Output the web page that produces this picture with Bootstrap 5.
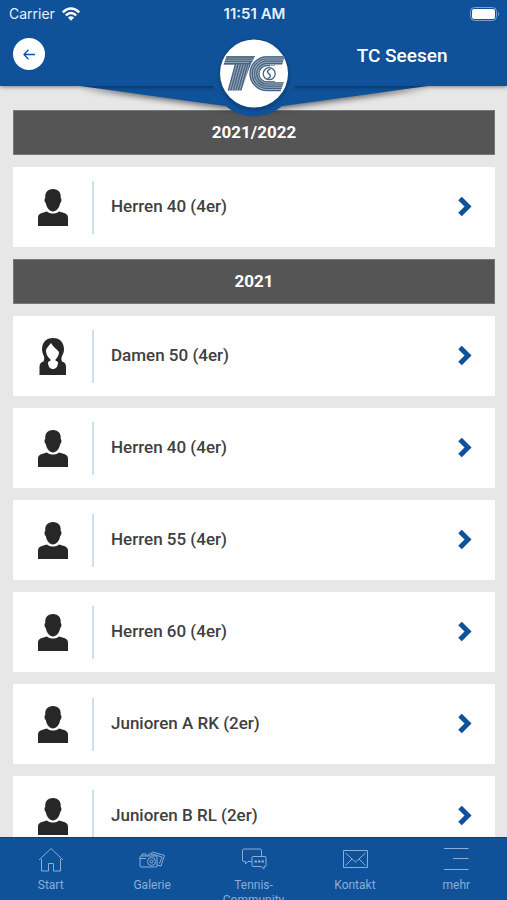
<!DOCTYPE html>
<html lang="de">
<head>
<meta charset="utf-8">
<meta name="viewport" content="width=device-width, initial-scale=1">
<title>TC Seesen</title>
<link href="https://cdn.jsdelivr.net/npm/bootstrap@5.3.0/dist/css/bootstrap.min.css" rel="stylesheet">
<style>
  :root { --club: #0f5299; }
  body { font-family: Roboto, "Liberation Sans", sans-serif; background: #e7e7e7; color: #404040; }
  .club-bg { background: var(--club); }
  .app-head { box-shadow: 0 1px 4px rgba(0,0,0,.45); padding-bottom: 14px; }
  .status { font-family: Inter, "Liberation Sans", sans-serif; font-size: 14px; line-height: 28px; color: #e6f0fb; padding: 0 7px 0 9px; }
  .status-carrier { gap: 6px; }
  .status-time { font-size: 15px; font-weight: 600; }
  .back { width: 32px; height: 32px; }
  .title-bar { padding: 10px 0 0 13px; height: 44px; }
  .club-name { font-size: 19px; font-weight: 500; line-height: 36px; }
  .ridge { left: 50%; top: 86px; transform: translateX(-50%); filter: drop-shadow(0 2px 3px rgba(0,0,0,.6)); }
  .emblem { left: 50%; top: 30px; transform: translateX(-50%); }
  .teams { padding: 24px 12px 0 13px; gap: 12px; }
  .season { background: #555; color: #fff; font-size: 17px; font-weight: 700; line-height: 45px; outline: 1px solid #777; outline-offset: -1px; }
  .team { height: 80px; color: #404040; font-size: 17px; font-weight: 500; padding-right: 23px; }
  .team-icon { width: 81px; height: 53px; border-right: 2px solid #cfdfee; padding-top: 2px; }
  .team-name { padding-left: 17px; }
  .tabs { height: 63px; border-top: 1px solid #0a3f7a; }
  .tab-link { color: #8baed6; font-size: 12px; line-height: 15px; padding-top: 7px; }
  .tab-link svg { margin-bottom: 5px; }
</style>
<script src="https://cdn.jsdelivr.net/npm/bootstrap@5.3.0/dist/js/bootstrap.bundle.min.js" defer></script>
</head>
<body>
<svg class="d-none" aria-hidden="true">
  <symbol id="man" viewBox="0 0 30 38">
    <path fill="#272727" d="M15 0C9.500 0 6.800 3.500 7.300 9C6.200 9 6.300 13.500 7.700 13.800C8.600 19 11.500 22.500 15 22.500S21.400 19 22.300 13.800C23.700 13.500 23.800 9 22.700 9C23.200 3.500 20.500 0 15 0Z"/>
    <path fill="#272727" d="M9 22.500C12 25.300 18 25.300 21 22.500C26 24 30 24.500 30 28.500V37H0V28.500C0 24.500 4 24 9 22.500Z"/>
  </symbol>
  <symbol id="woman" viewBox="0 0 30 38">
    <path fill="#272727" fill-rule="evenodd" d="M15 0C8 0 4.200 4.500 4 11C3.900 17 8 18 5.500 23.500C2.500 24.500 1.500 26 1.500 29V37H28V29C28 26 27 24.500 24 23.500C22 18 26.200 17 26 11C25.800 4.500 22 0 15 0ZM13 5C15 9 19 11 21 14C21 17.500 19 20 17.500 21.500V22.500L20 24C20 28.500 18 31 15 31S10 28.500 10 24L12.500 22.500V21.500C10 19.500 8 16 8 13C8 10 11 8 13 5Z"/>
  </symbol>
  <symbol id="next" viewBox="0 0 14 20"><path fill="none" stroke="#0f5299" stroke-width="5" d="M2 1.500L10 9.500L2 17.500"/></symbol>
</svg>

<div class="d-flex flex-column vh-100 overflow-hidden">
  <header class="position-relative z-2">
    <svg class="ridge position-absolute" width="400" height="26" viewBox="0 0 400 26" aria-hidden="true"><path fill="#0f5299" d="M0 -2H400L374 0L200 24L26 0Z"/></svg>
    <div class="app-head club-bg position-relative">
      <div class="status row g-0 align-items-center">
        <div class="status-carrier col d-flex align-items-center">Carrier
          <svg width="20" height="14" viewBox="0 0 18 14" role="img" aria-label="WLAN"><g fill="none" stroke="#fff" stroke-width="2.500"><path d="M.8 5.300Q9 -2.300 17.200 5.300M3.800 8.400Q9 3.600 14.200 8.400"/></g><path fill="#fff" d="M5.900 10.500Q9 8 12.100 10.500L9 13.700Z"/></svg>
        </div>
        <div class="status-time col text-center">11:51 AM</div>
        <div class="col d-flex justify-content-end">
          <svg width="30" height="14" viewBox="0 0 30 14" role="img" aria-label="Akku voll"><rect x=".5" y=".5" width="26" height="13" rx="4" fill="none" stroke="#7aa3d2"/><rect x="2" y="2" width="23" height="10" rx="2" fill="#fff"/><path fill="#7aa3d2" d="M28 4.500Q30 7 28 9.500Z"/></svg>
        </div>
      </div>
      <div class="title-bar row g-0">
        <div class="col-7"><button type="button" class="back btn p-0 bg-white rounded-circle border-0 d-flex align-items-center justify-content-center" aria-label="Zurück"><svg width="12" height="11" viewBox="0 0 12 11"><path fill="none" stroke="#0f5299" stroke-width="1.300" d="M5.500 .8L1 5.500L5.500 10.200M1 5.500H12"/></svg></button></div>
        <h1 class="club-name col-5 mb-0 text-white text-center pe-1">TC Seesen</h1>
      </div>
    </div>
    <svg class="emblem position-absolute" width="88" height="88" viewBox="210 30 88 88" role="img" aria-label="TC Seesen Logo">
      <defs>
        <radialGradient id="halo"><stop offset=".76" stop-color="#083465"/><stop offset="1" stop-color="#0f5299"/></radialGradient>
        <clipPath id="tee"><path d="M226.500 56H255L248 71L241.500 90.500H227.500L234.500 65H223.500Z"/></clipPath>
        <clipPath id="cee"><path d="M245 55H285L282 65H275V82H284L280.500 91.500H245Z"/></clipPath>
      </defs>
      <circle cx="254" cy="73.500" r="43" fill="#0f5299"/>
      <circle cx="254" cy="75" r="38" fill="url(#halo)"/>
      <circle cx="254" cy="73.500" r="34" fill="#fff"/>
      <g clip-path="url(#tee)">
        <path fill="#94a6b7" d="M222 55H256V92H222Z"/>
        <path fill="none" stroke="#456280" stroke-width="1.300" d="M222 57H256M222 59.200H255M222 61.400H253M222 63.600H251M235.500 64L228 92M238 64L230.500 92M240.500 64L233 92M243 64L235.500 92M245.500 64L238 92M248 63L240.500 92M250.500 62L243 92"/>
      </g>
      <circle cx="268" cy="73.700" r="19.300" fill="#fff"/>
      <g clip-path="url(#cee)" fill="none">
        <path stroke="#9dadbc" stroke-width="10" d="M286 61H267A12.700 12.700 0 0 0 267 86.400H286"/>
        <path stroke="#456280" stroke-width="1.200" d="M286 56.800H267A16.900 16.900 0 0 0 267 90.600H286M286 59H267A14.700 14.700 0 0 0 267 88.400H286M286 61.200H267A12.500 12.500 0 0 0 267 86.200H286M286 63.400H267A10.300 10.300 0 0 0 267 84H286M270 65.600H267A8.100 8.100 0 0 0 267 81.800H286"/>
      </g>
      <circle cx="269.200" cy="73.700" r="6" fill="#fff" stroke="#456280" stroke-width="1.300"/>
      <path fill="none" stroke="#2d4e6e" stroke-width="1.300" d="M270.500 69C266 70.500 267.500 73 269.300 74C271 75.500 270.500 78 267.500 78.500"/>
    </svg>
  </header>

  <main class="teams d-flex flex-column flex-grow-1 overflow-hidden">
    <h2 class="season text-center mb-0 flex-shrink-0">2021/2022</h2>
    <a href="#" class="team bg-white text-decoration-none d-flex align-items-center flex-shrink-0"><span class="team-icon d-flex align-items-center justify-content-center"><svg width="30" height="38"><use href="#man"/></svg></span><span class="team-name flex-grow-1">Herren 40 (4er)</span><svg width="14" height="20"><use href="#next"/></svg></a>
    <h2 class="season text-center mb-0 flex-shrink-0">2021</h2>
    <a href="#" class="team bg-white text-decoration-none d-flex align-items-center flex-shrink-0"><span class="team-icon d-flex align-items-center justify-content-center"><svg width="30" height="38"><use href="#woman"/></svg></span><span class="team-name flex-grow-1">Damen 50 (4er)</span><svg width="14" height="20"><use href="#next"/></svg></a>
    <a href="#" class="team bg-white text-decoration-none d-flex align-items-center flex-shrink-0"><span class="team-icon d-flex align-items-center justify-content-center"><svg width="30" height="38"><use href="#man"/></svg></span><span class="team-name flex-grow-1">Herren 40 (4er)</span><svg width="14" height="20"><use href="#next"/></svg></a>
    <a href="#" class="team bg-white text-decoration-none d-flex align-items-center flex-shrink-0"><span class="team-icon d-flex align-items-center justify-content-center"><svg width="30" height="38"><use href="#man"/></svg></span><span class="team-name flex-grow-1">Herren 55 (4er)</span><svg width="14" height="20"><use href="#next"/></svg></a>
    <a href="#" class="team bg-white text-decoration-none d-flex align-items-center flex-shrink-0"><span class="team-icon d-flex align-items-center justify-content-center"><svg width="30" height="38"><use href="#man"/></svg></span><span class="team-name flex-grow-1">Herren 60 (4er)</span><svg width="14" height="20"><use href="#next"/></svg></a>
    <a href="#" class="team bg-white text-decoration-none d-flex align-items-center flex-shrink-0"><span class="team-icon d-flex align-items-center justify-content-center"><svg width="30" height="38"><use href="#man"/></svg></span><span class="team-name flex-grow-1">Junioren A RK (2er)</span><svg width="14" height="20"><use href="#next"/></svg></a>
    <a href="#" class="team bg-white text-decoration-none d-flex align-items-center flex-shrink-0"><span class="team-icon d-flex align-items-center justify-content-center"><svg width="30" height="38"><use href="#man"/></svg></span><span class="team-name flex-grow-1">Junioren B RL (2er)</span><svg width="14" height="20"><use href="#next"/></svg></a>
  </main>

  <nav class="tabs club-bg row g-0 flex-shrink-0 overflow-hidden text-center" aria-label="Hauptmenü">
    <a href="#" class="tab-link col text-decoration-none d-flex flex-column align-items-center"><svg class="flex-shrink-0" width="28" height="28" viewBox="0 0 28 28" fill="none" stroke="currentColor"><path d="M2 15L14 3.500L26 15M4.500 14V26H11.500V18.500H16.500V26H23.500V14"/></svg>Start</a>
    <a href="#" class="tab-link col text-decoration-none d-flex flex-column align-items-center"><svg class="flex-shrink-0" width="28" height="28" viewBox="0 0 28 28" fill="none" stroke="currentColor"><rect x="2" y="11" width="17" height="11" rx="1"/><path d="M4 11V9H8V11M10 11L11 9H15L16 11M13 9L14.500 7L26.500 10.500L23 21L19 20M16 9.500L24 12L21.500 18.500"/><circle cx="13.500" cy="16.500" r="4"/><circle cx="13.500" cy="16.500" r="1.500"/><path d="M2 13.500H8"/></svg>Galerie</a>
    <a href="#" class="tab-link col text-decoration-none d-flex flex-column align-items-center"><svg class="flex-shrink-0" width="28" height="28" viewBox="0 0 28 28" fill="none" stroke="currentColor"><path d="M11.500 16.500H8L5.500 19V16.500H4Q2.500 16.500 2.500 15V5.500Q2.500 4 4 4H20Q21.500 4 21.500 5.500V11M13 11.500H25Q26 11.500 26 12.500V20.500Q26 21.500 25 21.500H24V24L21 21.500H13Q12 21.500 12 20.500V12.500Q12 11.500 13 11.500Z"/><path stroke-width="2" d="M14.500 16.500H17M18 16.500H20.500M21.500 16.500H24"/></svg><span>Tennis-<br>Community</span></a>
    <a href="#" class="tab-link col text-decoration-none d-flex flex-column align-items-center"><svg class="flex-shrink-0" width="28" height="28" viewBox="0 0 28 28" fill="none" stroke="currentColor"><path d="M2.500 5.500H26.500V22.500H2.500ZM4.500 8L14.500 17L24.500 8M4.500 20.500L11 14M24.500 20.500L18 14"/></svg>Kontakt</a>
    <a href="#" class="tab-link col text-decoration-none d-flex flex-column align-items-center"><svg class="flex-shrink-0" width="28" height="28" viewBox="0 0 28 28" fill="none" stroke="currentColor"><path d="M2 3.500H26.500M11 13.500H26.500M2 24.500H26.500"/></svg>mehr</a>
  </nav>
</div>
</body>
</html>
